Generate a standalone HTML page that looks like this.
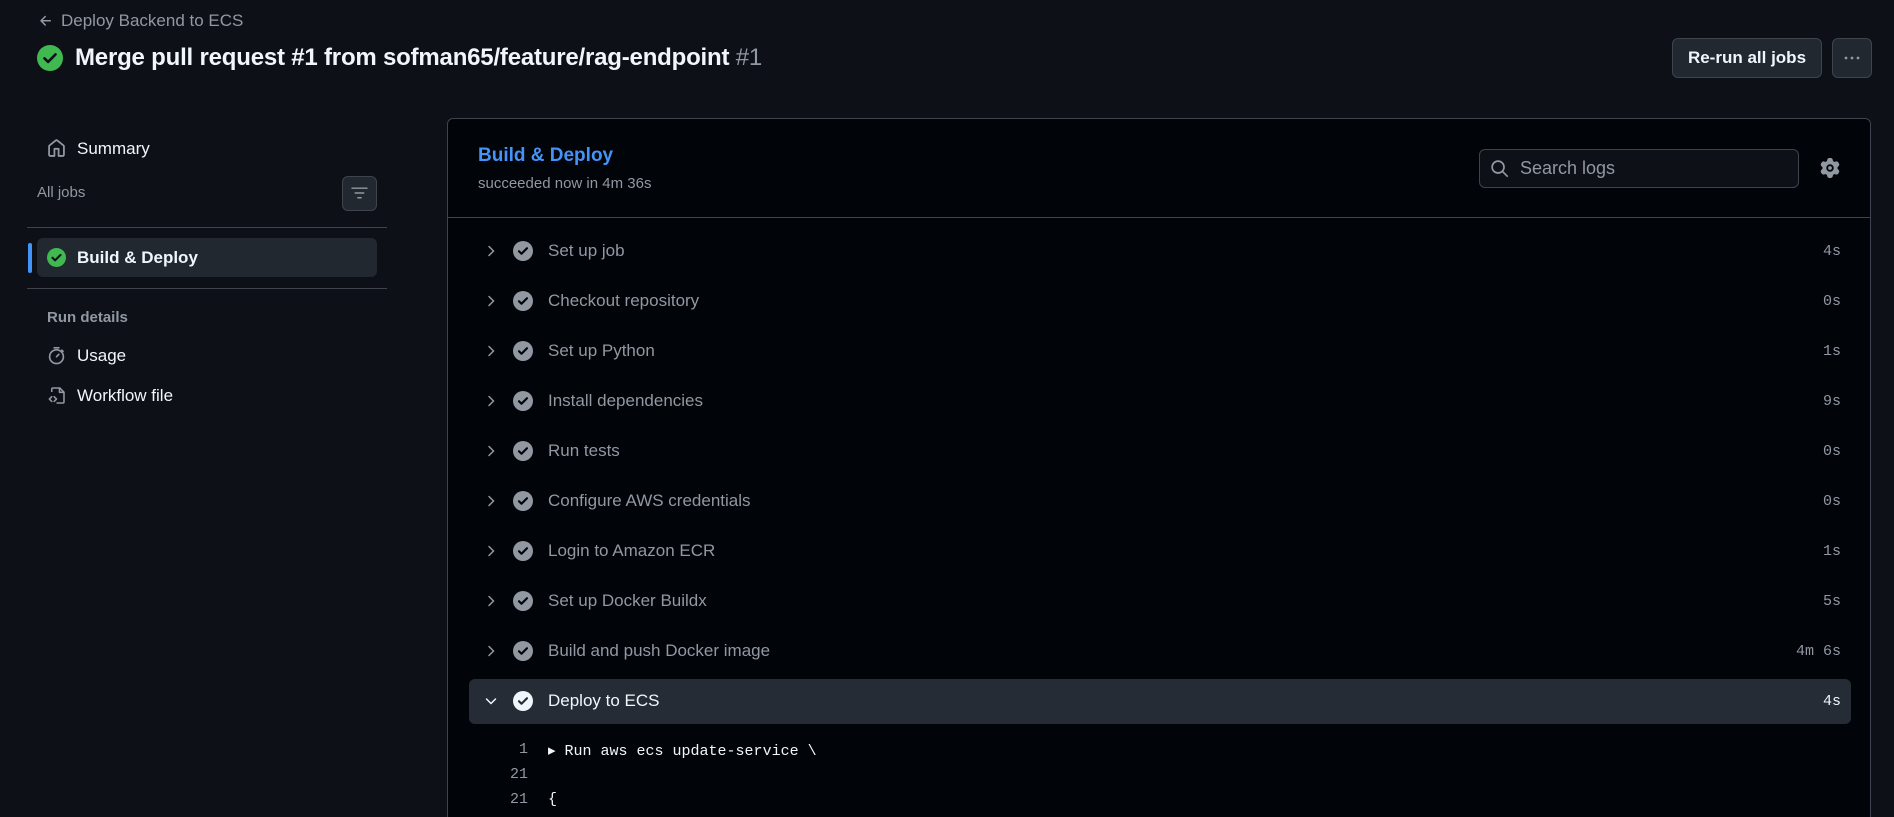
<!DOCTYPE html>
<html><head><meta charset="utf-8"><style>
*{box-sizing:border-box;margin:0;padding:0}
html{width:1894px;height:817px;overflow:hidden}
body{width:1894px;height:817px;overflow:hidden;background:#0d1117;font-family:"Liberation Sans",sans-serif;color:#f0f6fc;position:relative}
.a{position:absolute;white-space:nowrap}
.mono{font-family:"Liberation Mono",monospace}
.step{position:absolute;left:469px;width:1382px;height:45px}
.step .chev{position:absolute;left:14px;top:14px}
.step .ic{position:absolute;left:44px;top:12px}
.step .t{position:absolute;left:79px;top:12px;font-size:17px;color:#9198a1}
.step .d{position:absolute;right:10px;top:14px;font-size:15px;color:#9198a1}
</style></head><body>
<svg class="a" style="left:38px;top:13px" width="16" height="16" viewBox="0 0 16 16"><path d="M7.78 12.53a.75.75 0 0 1-1.06 0L2.47 8.28a.75.75 0 0 1 0-1.06l4.25-4.25a.75.75 0 0 1 1.06 1.06L4.81 7h7.44a.75.75 0 0 1 0 1.5H4.81l2.97 2.97a.75.75 0 0 1 0 1.06Z" fill="#9198a1"/></svg>
<div class="a" style="left:61px;top:11px;font-size:17px;color:#9198a1">Deploy Backend to ECS</div>
<svg class="a" style="left:37px;top:45px" width="26" height="26" viewBox="0 0 16 16"><circle cx="8" cy="8" r="8" fill="#3fb950"/><path d="M4.6 8.2l2.2 2.2 4.6-4.6" stroke="#0d1117" stroke-width="1.6" fill="none" stroke-linecap="round" stroke-linejoin="round"/></svg>
<div class="a" style="left:75px;top:44px;font-size:24px;font-weight:bold;color:#f0f6fc;letter-spacing:-0.2px">Merge pull request #1 from sofman65/feature/rag-endpoint <span style="font-weight:normal;color:#9198a1">#1</span></div>
<div class="a" style="left:1672px;top:38px;width:150px;height:40px;border:1px solid #3d444d;border-radius:6px;background:#212830;font-size:17px;font-weight:bold;text-align:center;line-height:38px">Re-run all jobs</div>
<div class="a" style="left:1832px;top:38px;width:40px;height:40px;border:1px solid #3d444d;border-radius:6px;background:#212830"></div>
<svg class="a" style="left:1842px;top:50px" width="20" height="16" viewBox="0 0 20 16"><circle cx="4" cy="8" r="1.4" fill="#9198a1"/><circle cx="10" cy="8" r="1.4" fill="#9198a1"/><circle cx="16" cy="8" r="1.4" fill="#9198a1"/></svg>
<svg class="a" style="left:47px;top:139px" width="19" height="19" viewBox="0 0 16 16"><path d="M6.906.664a1.749 1.749 0 0 1 2.187 0l5.25 4.2c.415.332.657.835.657 1.367v7.019A1.75 1.75 0 0 1 13.25 15h-3.5a.75.75 0 0 1-.75-.75V9H7v5.25a.75.75 0 0 1-.75.75h-3.5A1.75 1.75 0 0 1 1 13.25V6.23c0-.531.242-1.034.657-1.366l5.25-4.2Zm1.250 1.171a.25.25 0 0 0-.312 0l-5.25 4.2a.25.25 0 0 0-.094.196v7.019c0 .138.112.25.25.25H5.5V8.25a.75.75 0 0 1 .75-.75h3.5a.75.75 0 0 1 .75.75v5.25h2.75a.25.25 0 0 0 .25-.25V6.23a.25.25 0 0 0-.094-.195Z" fill="#9198a1"/></svg>
<div class="a" style="left:77px;top:139px;font-size:17px">Summary</div>
<div class="a" style="left:37px;top:184px;font-size:15px;color:#9198a1">All jobs</div>
<div class="a" style="left:342px;top:176px;width:35px;height:35px;border:1px solid #3d444d;border-radius:6px;background:#212830"></div>
<svg class="a" style="left:351px;top:185px" width="17" height="17" viewBox="0 0 16 16"><path d="M1 3h14M4 7.5h8M6.5 12h3" stroke="#9198a1" stroke-width="1.4" stroke-linecap="round"/></svg>
<div class="a" style="left:27px;top:227px;width:360px;height:1px;background:#3d444d"></div>
<div class="a" style="left:28px;top:243px;width:4px;height:30px;border-radius:2px;background:#4493f8"></div>
<div class="a" style="left:37px;top:238px;width:340px;height:39px;border-radius:6px;background:#212830"></div>
<svg class="a" style="left:47px;top:248px" width="19" height="19" viewBox="0 0 16 16"><circle cx="8" cy="8" r="8" fill="#3fb950"/><path d="M4.6 8.2l2.2 2.2 4.6-4.6" stroke="#0d1117" stroke-width="1.7" fill="none" stroke-linecap="round" stroke-linejoin="round"/></svg>
<div class="a" style="left:77px;top:248px;font-size:17px;font-weight:bold">Build &amp; Deploy</div>
<div class="a" style="left:27px;top:288px;width:360px;height:1px;background:#3d444d"></div>
<div class="a" style="left:47px;top:309px;font-size:15px;font-weight:bold;color:#9198a1">Run details</div>
<svg class="a" style="left:47px;top:346px" width="19" height="19" viewBox="0 0 16 16"><circle cx="8" cy="9" r="5.8" stroke="#9198a1" stroke-width="1.4" fill="none"/><path d="M6 1.5h4M8 9l2-2M12.5 3.5l1 1" stroke="#9198a1" stroke-width="1.4" stroke-linecap="round"/></svg>
<div class="a" style="left:77px;top:346px;font-size:17px">Usage</div>
<svg class="a" style="left:47px;top:386px" width="19" height="19" viewBox="0 0 16 16"><path d="M4 5V2.5c0-.5.4-.8.8-.8h6l3.5 3.5v8.3c0 .5-.4.8-.8.8H8" stroke="#9198a1" stroke-width="1.3" fill="none"/><path d="M10.5 1.8v3.5h3.7M4 9l-2 2 2 2M6 9l2 2-2 2" stroke="#9198a1" stroke-width="1.3" fill="none" stroke-linecap="round" stroke-linejoin="round"/></svg>
<div class="a" style="left:77px;top:386px;font-size:17px">Workflow file</div>
<div class="a" style="left:447px;top:118px;width:1424px;height:710px;background:#010409;border:1px solid #3d444d;border-radius:6px"></div>
<div class="a" style="left:447px;top:217px;width:1424px;height:1px;background:#3d444d"></div>
<div class="a" style="left:478px;top:145px;font-size:19px;font-weight:bold;color:#4493f8">Build &amp; Deploy</div>
<div class="a" style="left:478px;top:175px;font-size:15px;color:#9198a1">succeeded now in 4m 36s</div>
<div class="a" style="left:1479px;top:149px;width:320px;height:39px;border:1px solid #3d444d;border-radius:6px;background:#0d1117"></div>
<svg class="a" style="left:1490px;top:159px" width="19" height="19" viewBox="0 0 16 16"><circle cx="6.8" cy="6.8" r="5" stroke="#9198a1" stroke-width="1.4" fill="none"/><path d="M10.5 10.5l4 4" stroke="#9198a1" stroke-width="1.4" stroke-linecap="round"/></svg>
<div class="a" style="left:1520px;top:158px;font-size:18px;color:#9198a1">Search logs</div>
<svg class="a" style="left:1820px;top:158px" width="20" height="20" viewBox="0 0 16 16"><path d="M8 0a8.2 8.2 0 0 1 .701.031C9.444.095 9.99.645 10.160 1.290l.288 1.107c.018.066.079.158.212.224.231.114.454.243.668.386.123.082.233.09.299.071l1.103-.303c.644-.176 1.392.021 1.820.63.27.385.506.792.704 1.218.315.675.111 1.422-.364 1.891l-.814.806c-.049.048-.098.147-.088.294.016.257.016.515 0 .772-.01.147.038.246.088.294l.814.806c.475.469.679 1.216.364 1.891a7.977 7.977 0 0 1-.704 1.217c-.428.61-1.176.807-1.820.63l-1.102-.302c-.067-.019-.177-.011-.3.071a5.909 5.909 0 0 1-.668.386c-.133.066-.194.158-.211.224l-.29 1.106c-.168.646-.715 1.196-1.458 1.260a8.006 8.006 0 0 1-1.402 0c-.743-.064-1.289-.614-1.458-1.260l-.289-1.106c-.018-.066-.079-.158-.212-.224a5.738 5.738 0 0 1-.668-.386c-.123-.082-.233-.09-.299-.071l-1.103.303c-.644.176-1.392-.021-1.820-.63a8.12 8.12 0 0 1-.704-1.218c-.315-.675-.111-1.422.363-1.891l.815-.806c.05-.048.098-.147.088-.294a6.214 6.214 0 0 1 0-.772c.01-.147-.038-.246-.088-.294l-.815-.806C.635 6.045.431 5.298.746 4.623a7.92 7.92 0 0 1 .704-1.217c.428-.61 1.176-.807 1.820-.63l1.102.302c.067.019.177.011.3-.071.214-.143.437-.272.668-.386.133-.066.194-.158.211-.224l.29-1.106C6.009.645 6.556.095 7.299.03 7.53.01 7.764 0 8 0ZM11 8a3 3 0 1 1-6 0 3 3 0 0 1 6 0ZM9.5 8a1.5 1.5 0 1 0-3.001.001A1.5 1.5 0 0 0 9.5 8Z" fill="#9198a1" fill-rule="evenodd"/></svg>
<div class="step" style="top:229px"><svg class="chev" width="16" height="16" viewBox="0 0 16 16"><path d="M6 3.5L10.5 8 6 12.5" stroke="#9198a1" stroke-width="1.5" fill="none" stroke-linecap="round"/></svg><svg class="ic" width="20" height="20" viewBox="0 0 16 16"><circle cx="8" cy="8" r="8" fill="#9198a1"/><path d="M4.8 8.2l2 2 4.4-4.4" stroke="#010409" stroke-width="1.7" fill="none" stroke-linecap="round" stroke-linejoin="round"/></svg><div class="t">Set up job</div><div class="d mono">4s</div></div>
<div class="step" style="top:279px"><svg class="chev" width="16" height="16" viewBox="0 0 16 16"><path d="M6 3.5L10.5 8 6 12.5" stroke="#9198a1" stroke-width="1.5" fill="none" stroke-linecap="round"/></svg><svg class="ic" width="20" height="20" viewBox="0 0 16 16"><circle cx="8" cy="8" r="8" fill="#9198a1"/><path d="M4.8 8.2l2 2 4.4-4.4" stroke="#010409" stroke-width="1.7" fill="none" stroke-linecap="round" stroke-linejoin="round"/></svg><div class="t">Checkout repository</div><div class="d mono">0s</div></div>
<div class="step" style="top:329px"><svg class="chev" width="16" height="16" viewBox="0 0 16 16"><path d="M6 3.5L10.5 8 6 12.5" stroke="#9198a1" stroke-width="1.5" fill="none" stroke-linecap="round"/></svg><svg class="ic" width="20" height="20" viewBox="0 0 16 16"><circle cx="8" cy="8" r="8" fill="#9198a1"/><path d="M4.8 8.2l2 2 4.4-4.4" stroke="#010409" stroke-width="1.7" fill="none" stroke-linecap="round" stroke-linejoin="round"/></svg><div class="t">Set up Python</div><div class="d mono">1s</div></div>
<div class="step" style="top:379px"><svg class="chev" width="16" height="16" viewBox="0 0 16 16"><path d="M6 3.5L10.5 8 6 12.5" stroke="#9198a1" stroke-width="1.5" fill="none" stroke-linecap="round"/></svg><svg class="ic" width="20" height="20" viewBox="0 0 16 16"><circle cx="8" cy="8" r="8" fill="#9198a1"/><path d="M4.8 8.2l2 2 4.4-4.4" stroke="#010409" stroke-width="1.7" fill="none" stroke-linecap="round" stroke-linejoin="round"/></svg><div class="t">Install dependencies</div><div class="d mono">9s</div></div>
<div class="step" style="top:429px"><svg class="chev" width="16" height="16" viewBox="0 0 16 16"><path d="M6 3.5L10.5 8 6 12.5" stroke="#9198a1" stroke-width="1.5" fill="none" stroke-linecap="round"/></svg><svg class="ic" width="20" height="20" viewBox="0 0 16 16"><circle cx="8" cy="8" r="8" fill="#9198a1"/><path d="M4.8 8.2l2 2 4.4-4.4" stroke="#010409" stroke-width="1.7" fill="none" stroke-linecap="round" stroke-linejoin="round"/></svg><div class="t">Run tests</div><div class="d mono">0s</div></div>
<div class="step" style="top:479px"><svg class="chev" width="16" height="16" viewBox="0 0 16 16"><path d="M6 3.5L10.5 8 6 12.5" stroke="#9198a1" stroke-width="1.5" fill="none" stroke-linecap="round"/></svg><svg class="ic" width="20" height="20" viewBox="0 0 16 16"><circle cx="8" cy="8" r="8" fill="#9198a1"/><path d="M4.8 8.2l2 2 4.4-4.4" stroke="#010409" stroke-width="1.7" fill="none" stroke-linecap="round" stroke-linejoin="round"/></svg><div class="t">Configure AWS credentials</div><div class="d mono">0s</div></div>
<div class="step" style="top:529px"><svg class="chev" width="16" height="16" viewBox="0 0 16 16"><path d="M6 3.5L10.5 8 6 12.5" stroke="#9198a1" stroke-width="1.5" fill="none" stroke-linecap="round"/></svg><svg class="ic" width="20" height="20" viewBox="0 0 16 16"><circle cx="8" cy="8" r="8" fill="#9198a1"/><path d="M4.8 8.2l2 2 4.4-4.4" stroke="#010409" stroke-width="1.7" fill="none" stroke-linecap="round" stroke-linejoin="round"/></svg><div class="t">Login to Amazon ECR</div><div class="d mono">1s</div></div>
<div class="step" style="top:579px"><svg class="chev" width="16" height="16" viewBox="0 0 16 16"><path d="M6 3.5L10.5 8 6 12.5" stroke="#9198a1" stroke-width="1.5" fill="none" stroke-linecap="round"/></svg><svg class="ic" width="20" height="20" viewBox="0 0 16 16"><circle cx="8" cy="8" r="8" fill="#9198a1"/><path d="M4.8 8.2l2 2 4.4-4.4" stroke="#010409" stroke-width="1.7" fill="none" stroke-linecap="round" stroke-linejoin="round"/></svg><div class="t">Set up Docker Buildx</div><div class="d mono">5s</div></div>
<div class="step" style="top:629px"><svg class="chev" width="16" height="16" viewBox="0 0 16 16"><path d="M6 3.5L10.5 8 6 12.5" stroke="#9198a1" stroke-width="1.5" fill="none" stroke-linecap="round"/></svg><svg class="ic" width="20" height="20" viewBox="0 0 16 16"><circle cx="8" cy="8" r="8" fill="#9198a1"/><path d="M4.8 8.2l2 2 4.4-4.4" stroke="#010409" stroke-width="1.7" fill="none" stroke-linecap="round" stroke-linejoin="round"/></svg><div class="t">Build and push Docker image</div><div class="d mono">4m 6s</div></div>
<div class="step" style="top:679px;background:#262c36;border-radius:6px"><svg class="chev" width="16" height="16" viewBox="0 0 16 16"><path d="M3.5 6L8 10.5 12.5 6" stroke="#f0f6fc" stroke-width="1.5" fill="none" stroke-linecap="round"/></svg><svg class="ic" width="20" height="20" viewBox="0 0 16 16"><circle cx="8" cy="8" r="8" fill="#f0f6fc"/><path d="M4.8 8.2l2 2 4.4-4.4" stroke="#262c36" stroke-width="1.7" fill="none" stroke-linecap="round" stroke-linejoin="round"/></svg><div class="t" style="color:#f0f6fc">Deploy to ECS</div><div class="d mono" style="color:#f0f6fc">4s</div></div>
<div class="a mono" style="left:490px;top:741px;width:38px;text-align:right;font-size:15px;color:#9198a1">1</div>
<div class="a mono" style="left:548px;top:741px;font-size:15px;color:#f0f6fc">▸ Run aws ecs update-service \</div>
<div class="a mono" style="left:490px;top:766px;width:38px;text-align:right;font-size:15px;color:#9198a1">21</div>
<div class="a mono" style="left:490px;top:791px;width:38px;text-align:right;font-size:15px;color:#9198a1">21</div>
<div class="a mono" style="left:548px;top:791px;font-size:15px;color:#f0f6fc">{</div>
</body></html>
